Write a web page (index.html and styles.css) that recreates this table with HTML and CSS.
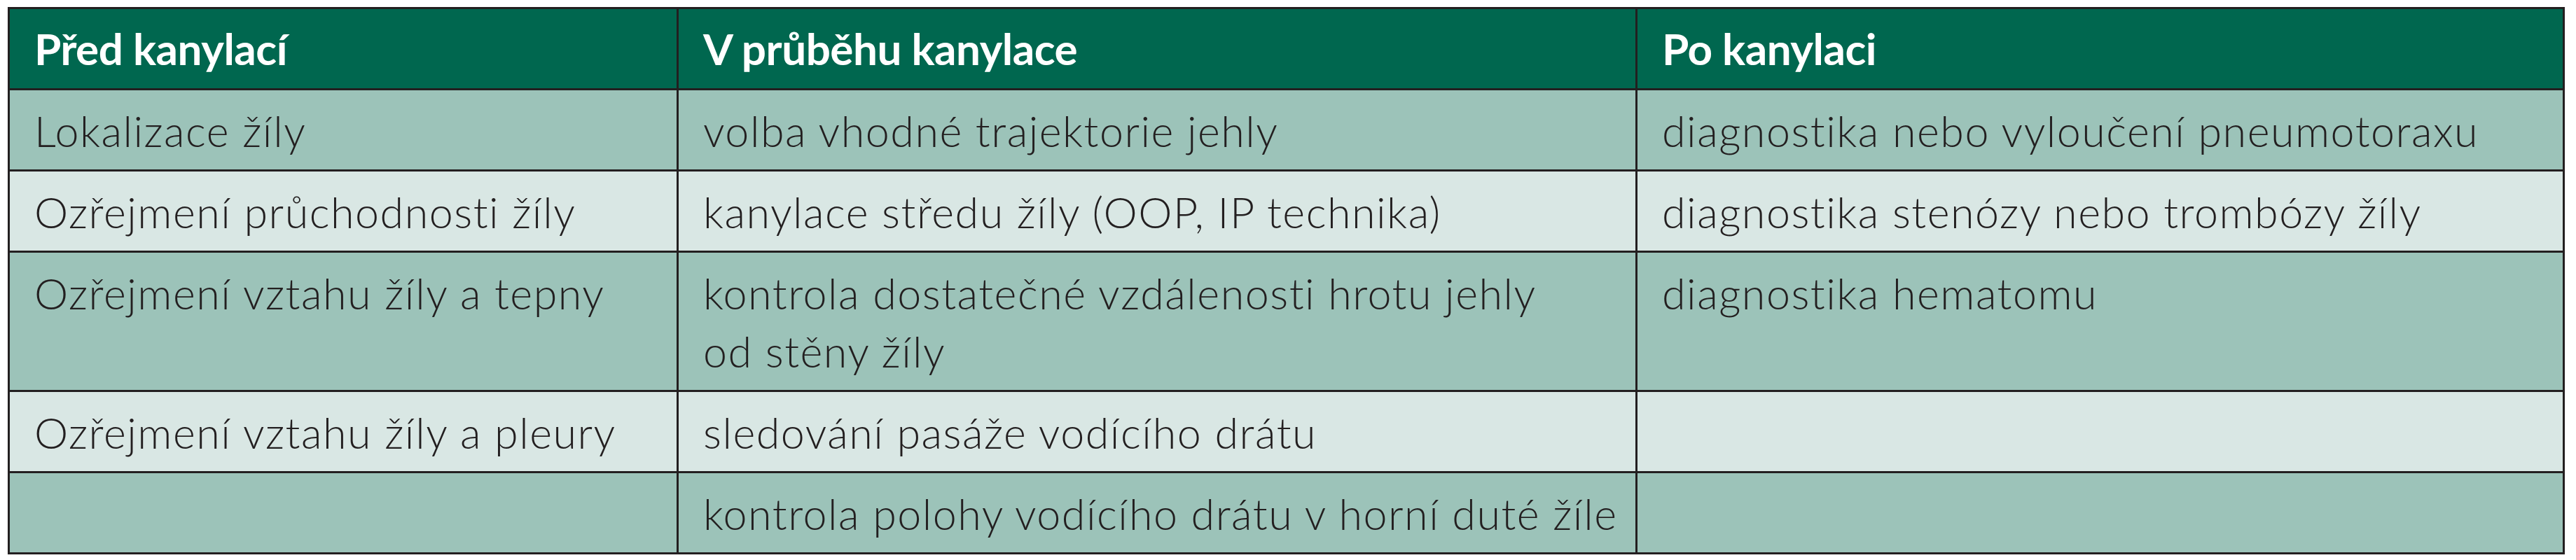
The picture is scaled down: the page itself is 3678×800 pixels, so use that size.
FILE: index.html
```html
<!DOCTYPE html>
<html lang="cs">
<head>
<meta charset="utf-8">
<title>Ultrazvuk při kanylaci</title>
<link rel="stylesheet" href="styles.css">
</head>
<body>
<table class="usg-table">
  <colgroup>
    <col class="col-before">
    <col class="col-during">
    <col class="col-after">
  </colgroup>
  <thead>
    <tr class="head-row">
      <th>Před kanylací</th>
      <th>V průběhu kanylace</th>
      <th>Po kanylaci</th>
    </tr>
  </thead>
  <tbody>
    <tr class="row-dark">
      <td>Lokalizace žíly</td>
      <td>volba vhodné trajektorie jehly</td>
      <td>diagnostika nebo vyloučení pneumotoraxu</td>
    </tr>
    <tr class="row-light">
      <td>Ozřejmení průchodnosti žíly</td>
      <td>kanylace středu žíly (OOP, IP technika)</td>
      <td>diagnostika stenózy nebo trombózy žíly</td>
    </tr>
    <tr class="row-dark">
      <td>Ozřejmení vztahu žíly a tepny</td>
      <td>kontrola dostatečné vzdálenosti hrotu jehly<br>od stěny žíly</td>
      <td>diagnostika hematomu</td>
    </tr>
    <tr class="row-light">
      <td>Ozřejmení vztahu žíly a pleury</td>
      <td>sledování pasáže vodícího drátu</td>
      <td></td>
    </tr>
    <tr class="row-dark">
      <td></td>
      <td>kontrola polohy vodícího drátu v horní duté žíle</td>
      <td></td>
    </tr>
  </tbody>
</table>
</body>
</html>
```

FILE: styles.css
```css
html, body {
  background: #ffffff;
}

body {
  margin: 10px 0 0 11px;
}

.usg-table {
  width: 3648px;
  border-collapse: collapse;
  table-layout: fixed;
  font-family: "Lato", "Open Sans", sans-serif;
  color: #231f20;
}

.col-before { width: 955px; }
.col-during { width: 1369px; }
.col-after { width: 1324px; }

.usg-table th,
.usg-table td {
  border: 3px solid #231f20;
  text-align: left;
  vertical-align: top;
  padding: 16px 20px 14px 35px;
  line-height: 83px;
  white-space: nowrap;
}

.usg-table th {
  background: #00674f;
  color: #ffffff;
  font-weight: 700;
  font-size: 62px;
  letter-spacing: -0.5px;
  padding-top: 15px;
  padding-bottom: 15px;
}

.usg-table td {
  font-weight: 300;
  font-size: 61px;
  letter-spacing: 1.5px;
}

.row-dark td {
  background: #9cc3b9;
}

.row-light td {
  background: #d9e7e4;
}
```
